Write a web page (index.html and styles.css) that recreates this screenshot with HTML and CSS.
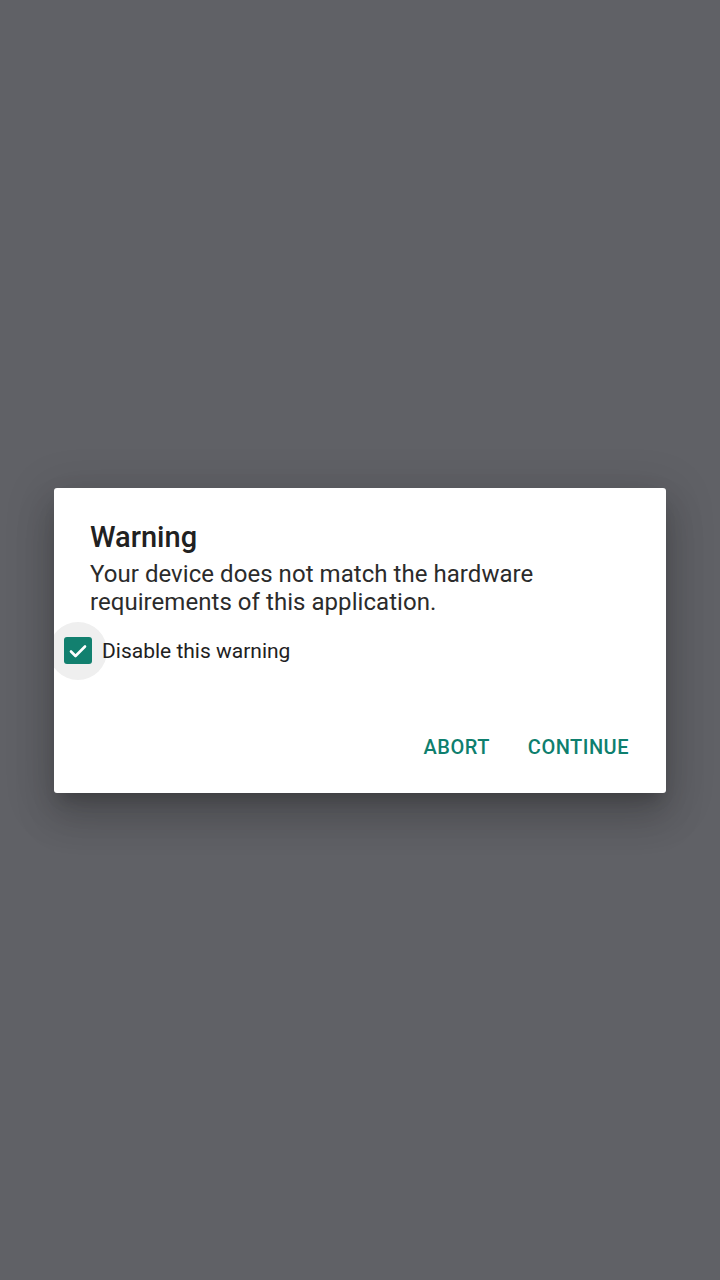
FILE: index.html
```html
<!DOCTYPE html>
<html>
<head>
<meta charset="utf-8">
<link rel="stylesheet" href="styles.css">
</head>
<body>
<div class="screen">
  <div class="dialog">
    <h1 class="title">Warning</h1>
    <p class="message">Your device does not match the hardware requirements of this application.</p>
    <label class="check-row">
      <span class="ripple">
        <span class="box">
          <svg viewBox="0 0 24 24" width="24" height="24"><path d="M5 12.5l4.5 4.5L19 7.5" fill="none" stroke="#fff" stroke-width="2.6" stroke-linecap="round" stroke-linejoin="round"/></svg>
        </span>
      </span>
      <span class="check-label">Disable this warning</span>
    </label>
    <div class="actions">
      <button class="btn">ABORT</button>
      <button class="btn">CONTINUE</button>
    </div>
  </div>
</div>
</body>
</html>
```

FILE: styles.css
```css
html, body {
  margin: 0;
  padding: 0;
}
body {
  background: #606166;
  font-family: Roboto, "Noto Sans", sans-serif;
}
.screen {
  width: 720px;
  height: 1280px;
  display: flex;
  align-items: center;
  justify-content: center;
}
.dialog {
  width: 612px;
  box-sizing: border-box;
  background: #fff;
  border-radius: 3px;
  padding: 33px 29px 22px 36px;
  overflow: hidden;
  box-shadow: 0 11px 15px -7px rgba(0,0,0,.2), 0 24px 38px 3px rgba(0,0,0,.14), 0 9px 46px 8px rgba(0,0,0,.12);
}
.title {
  margin: 0;
  font-size: 29px;
  line-height: 32px;
  font-weight: 500;
  color: #212121;
}
.message {
  margin: 7px 0 0 0;
  font-size: 24px;
  line-height: 28px;
  letter-spacing: 0.05px;
  color: #2b2b2b;
}
.check-row {
  display: flex;
  align-items: center;
  margin: 6px 0 0 -41px;
}
.ripple {
  width: 58px;
  height: 58px;
  border-radius: 50%;
  background: #efefef;
  display: flex;
  align-items: center;
  justify-content: center;
  flex: none;
}
.box {
  width: 28px;
  height: 27px;
  border-radius: 3px;
  background: #12806f;
  display: flex;
  align-items: center;
  justify-content: center;
}
.box svg {
  display: block;
}
.check-label {
  margin-left: -5px;
  font-size: 21px;
  line-height: 28px;
  color: #212121;
}
.actions {
  display: flex;
  justify-content: flex-end;
  gap: 22px;
  margin-top: 43px;
}
.btn {
  border: none;
  background: transparent;
  font-family: Roboto, "Noto Sans", sans-serif;
  font-size: 20px;
  font-weight: 500;
  letter-spacing: 0.5px;
  color: #0e7f6e;
  height: 48px;
  padding: 0 8px;
}
```
